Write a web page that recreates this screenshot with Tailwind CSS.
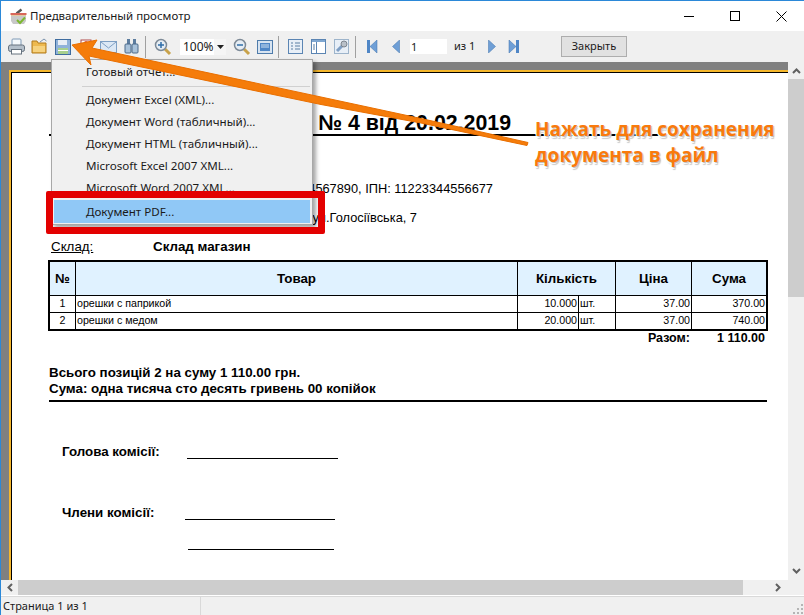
<!DOCTYPE html>
<html lang="ru">
<head>
    <meta charset="UTF-8">
    <meta name="viewport" content="width=device-width, initial-scale=1.0">
    <title>Предварительный просмотр</title>
    <script src="https://cdn.jsdelivr.net/npm/@tailwindcss/browser@4"></script>
</head>
<body class="bg-white overflow-hidden">
<div class="relative w-[804px] h-[615px] flex flex-col border-t border-l border-[#2b88d8] overflow-hidden font-['Noto_Sans',sans-serif] text-[#1a1a1a]">

    <!-- Заголовок окна -->
    <div class="h-[30px] shrink-0 flex items-center bg-white">
        <svg class="ml-[9px] w-[17px] h-[17px]" viewBox="0 0 17 17">
            <path d="M11.5 1.5 L6.5 5.5" stroke="#555" stroke-width="2.5"/>
            <path d="M1 7 H16 V13 L14 16 H3 L1 13Z" fill="#c8c8c8"/>
            <rect x="0.5" y="5" width="16" height="2" fill="#d9675a"/>
            <rect x="1" y="7" width="15" height="1" fill="#e3c9a0"/>
            <path d="M7 12 L10 15 L15 9.5" fill="none" stroke="#7cb82f" stroke-width="2"/>
        </svg>
        <span class="ml-[3px] text-[11.5px]">Предварительный просмотр</span>
        <div class="ml-auto flex items-center h-full">
            <div class="w-[46px] h-full flex items-center justify-center"><div class="w-[10px] h-px bg-black"></div></div>
            <div class="w-[46px] h-full flex items-center justify-center"><div class="w-[10px] h-[10px] border border-black"></div></div>
            <div class="w-[46px] h-full flex items-center justify-center">
                <svg class="w-[11px] h-[11px]" viewBox="0 0 11 11"><path d="M0.5 0.5 L10.5 10.5 M10.5 0.5 L0.5 10.5" stroke="#000" stroke-width="1"/></svg>
            </div>
        </div>
    </div>

    <!-- Панель инструментов -->
    <div class="h-[31px] shrink-0 flex items-center pl-[4px] bg-[#f0f0f0] text-[11px]">
        <div class="w-[23px] flex justify-center">
            <svg class="w-[17px] h-[17px]" viewBox="0 0 17 17"><rect x="4" y="1" width="9" height="7" rx="1" fill="#f4f8fc" stroke="#7f9ab6"/><rect x="0.5" y="7" width="16" height="6.5" rx="2" fill="#b4bfca" stroke="#66727f"/><rect x="3.5" y="11.5" width="10" height="4.5" fill="#fff" stroke="#66727f"/></svg>
        </div>
        <div class="w-[23px] flex justify-center">
            <svg class="w-[17px] h-[17px]" viewBox="0 0 17 17"><path d="M9 4 L13 1 L15.5 3" fill="none" stroke="#7b93ad"/><path d="M1 3 H6 L7 5 H15 V15 H1Z" fill="#eeb94f" stroke="#b07b1f"/><rect x="2" y="8" width="12" height="6" fill="#f6d27f"/></svg>
        </div>
        <div class="w-[23px] flex justify-center">
            <svg class="w-[16px] h-[16px]" viewBox="0 0 16 16"><rect x="0.5" y="0.5" width="15" height="15" fill="#8fb2d9" stroke="#3f6c9f"/><rect x="3" y="1" width="9" height="5" fill="#e8eef5"/><rect x="3" y="9" width="10" height="6" fill="#a8d08d"/><rect x="3" y="11" width="10" height="1" fill="#fff"/></svg>
        </div>
        <div class="w-[23px] flex justify-center">
            <svg class="w-[16px] h-[16px]" viewBox="0 0 16 16"><rect x="3" y="1" width="10" height="14" fill="#fff" stroke="#b04a4a"/><circle cx="8" cy="4" r="2" fill="#d9534f"/></svg>
        </div>
        <div class="w-[23px] flex justify-center">
            <svg class="w-[17px] h-[17px]" viewBox="0 0 17 17"><rect x="0.5" y="3.5" width="16" height="11" fill="#dce8f5" stroke="#7e9fc4"/><path d="M1 4 L8.5 10 L16 4" fill="none" stroke="#7e9fc4"/></svg>
        </div>
        <div class="w-[23px] flex justify-center">
            <svg class="w-[17px] h-[17px]" viewBox="0 0 17 17"><rect x="4" y="1" width="3" height="5" fill="#5d7d9f"/><rect x="10" y="1" width="3" height="5" fill="#5d7d9f"/><rect x="2" y="6" width="6" height="9" rx="1" fill="#a9c2da" stroke="#4c6a8a"/><rect x="9" y="6" width="6" height="9" rx="1" fill="#a9c2da" stroke="#4c6a8a"/></svg>
        </div>
        <div class="w-px h-[22px] ml-[2px] bg-[#a0a0a0]"></div>
        <div class="w-[23px] ml-[5px] flex justify-center">
            <svg class="w-[18px] h-[18px]" viewBox="0 0 18 18"><path d="M11 11 L16 16" stroke="#c8a24a" stroke-width="3"/><circle cx="7" cy="7" r="5.5" fill="#e6edf4" stroke="#7d8a97" stroke-width="1.5"/><path d="M4 7 H10 M7 4 V10" stroke="#2f6ea8" stroke-width="1.5"/></svg>
        </div>
        <div class="w-[46px] h-[16px] ml-[6px] bg-white flex items-center justify-between pl-[3px] text-[12px]">
            <span>100%</span>
            <div class="w-[12px] h-full bg-[#f5f5f5] flex items-center justify-center">
                <svg class="w-[7px] h-[4px]" viewBox="0 0 7 4"><path d="M0 0 H7 L3.5 4Z" fill="#222"/></svg>
            </div>
        </div>
        <div class="w-[23px] ml-[4px] flex justify-center">
            <svg class="w-[18px] h-[18px]" viewBox="0 0 18 18"><path d="M11 11 L16 16" stroke="#c8a24a" stroke-width="3"/><circle cx="7" cy="7" r="5.5" fill="#e6edf4" stroke="#7d8a97" stroke-width="1.5"/><path d="M4 7 H10" stroke="#2f6ea8" stroke-width="1.5"/></svg>
        </div>
        <div class="w-[23px] flex justify-center">
            <svg class="w-[16px] h-[14px]" viewBox="0 0 16 14"><rect x="0.5" y="0.5" width="15" height="13" fill="#d8e4f1" stroke="#4f7cab"/><rect x="3" y="3" width="10" height="8" fill="#4f86c6"/><path d="M4 5 H12 M4 7 H12" stroke="#cfe0f2"/></svg>
        </div>
        <div class="w-px h-[22px] ml-[2px] bg-[#a0a0a0]"></div>
        <div class="w-[23px] ml-[5px] flex justify-center">
            <svg class="w-[15px] h-[15px]" viewBox="0 0 15 15"><rect x="0.5" y="0.5" width="14" height="14" fill="#e8eff7" stroke="#5b85b3"/><path d="M3 4 H5 M7 4 H12 M3 7 H5 M7 7 H12 M3 10 H5 M7 10 H12" stroke="#5b7ea3"/></svg>
        </div>
        <div class="w-[23px] flex justify-center">
            <svg class="w-[15px] h-[15px]" viewBox="0 0 15 15"><rect x="0.5" y="0.5" width="14" height="14" fill="#fff" stroke="#5b85b3"/><rect x="1" y="1" width="13" height="2" fill="#7fa7d1"/><path d="M5.5 3 V14" stroke="#5b85b3"/><path d="M2 6 H4 M2 8 H4 M2 10 H4" stroke="#5b7ea3"/></svg>
        </div>
        <div class="w-[23px] flex justify-center">
            <svg class="w-[15px] h-[15px]" viewBox="0 0 15 15"><rect x="0.5" y="0.5" width="14" height="14" fill="#e8eff7" stroke="#9db4cb"/><path d="M3 12 L8 7" stroke="#7f9fc4" stroke-width="3"/><circle cx="10" cy="5" r="3" fill="#b9c0c8" stroke="#7d858e"/></svg>
        </div>
        <div class="w-px h-[22px] ml-[2px] bg-[#a0a0a0]"></div>
        <div class="w-[23px] ml-[5px] flex justify-center">
            <svg class="w-[11px] h-[13px]" viewBox="0 0 11 13"><rect x="0" y="0" width="3" height="13" fill="#4f86c6"/><path d="M10 0 V13 L3 6.5Z" fill="#6f9fd6" stroke="#3f73ad" stroke-width="0.5"/></svg>
        </div>
        <div class="w-[23px] flex justify-center">
            <svg class="w-[8px] h-[13px]" viewBox="0 0 8 13"><path d="M7.5 0 V13 L0.5 6.5Z" fill="#6f9fd6" stroke="#3f73ad" stroke-width="0.5"/></svg>
        </div>
        <div class="w-[37px] h-[15px] ml-[3px] bg-white pl-px text-[11px] leading-[15px]">1</div>
        <div class="ml-[7px] w-[24px] text-[11px]">из 1</div>
        <div class="w-[23px] ml-[2px] flex justify-center">
            <svg class="w-[8px] h-[13px]" viewBox="0 0 8 13"><path d="M0.5 0 V13 L7.5 6.5Z" fill="#6f9fd6" stroke="#3f73ad" stroke-width="0.5"/></svg>
        </div>
        <div class="w-[21px] flex justify-center">
            <svg class="w-[11px] h-[13px]" viewBox="0 0 11 13"><path d="M1 0 V13 L8 6.5Z" fill="#6f9fd6" stroke="#3f73ad" stroke-width="0.5"/><rect x="8" y="0" width="3" height="13" fill="#4f86c6"/></svg>
        </div>
        <div class="ml-[37px] w-[66px] h-[21px] flex items-center justify-center bg-[#e1e1e1] border border-[#adadad] text-[11px]">Закрыть</div>
    </div>

    <!-- Область просмотра -->
    <div class="flex-1 min-h-0 flex">
        <div class="flex-1 min-w-0 bg-[#808080] pl-2 pt-2 overflow-hidden">
            <div class="h-full border-l-2 border-t-2 border-[#f5b72c]">
                <div class="h-full bg-white border-l border-t border-black font-['Liberation_Sans',sans-serif] text-black">
                    <div class="pl-[37px] pr-[20px]">
                        <div class="mt-[39px] w-[610px] h-[24px] border-b-2 border-black text-right pr-[148px] text-[21.33px] leading-[22px] font-bold whitespace-nowrap">№ 4 від 20.02.2019</div>
                        <div class="mt-[46px] w-[444px] text-right text-[12.8px] leading-[14px] whitespace-nowrap">ЄДРПОУ: 1234567890, ІПН: 11223344556677</div>
                        <div class="mt-[15px] w-[368px] text-right text-[12.8px] leading-[14px] whitespace-nowrap">вул.Голосіївська, 7</div>
                        <div class="mt-[14px] ml-[2px] flex text-[13.33px] leading-[15px]">
                            <span class="w-[102px] underline">Склад:</span>
                            <span class="font-bold">Склад магазин</span>
                        </div>
                    </div>
                    <!-- Таблица -->
                    <div class="ml-[36px] mt-[6px] w-[720px] border-2 border-black">
                        <div class="h-[33px] flex items-center bg-[#e0f2ff] text-[13.33px] font-bold text-center">
                            <div class="w-[26px] h-full pt-px flex items-center justify-center border-r border-black">№</div>
                            <div class="w-[442px] h-full pt-px flex items-center justify-center border-r border-black">Товар</div>
                            <div class="w-[98px] h-full pt-px flex items-center justify-center border-r border-black">Кількість</div>
                            <div class="w-[76px] h-full pt-px flex items-center justify-center border-r border-black">Ціна</div>
                            <div class="flex-1 h-full pt-px flex items-center justify-center">Сума</div>
                        </div>
                        <div class="h-[17px] flex items-center border-t border-black text-[10.67px] leading-[15px]">
                            <div class="w-[26px] h-full text-center border-r border-black">1</div>
                            <div class="w-[442px] h-full pl-px border-r border-black">орешки с паприкой</div>
                            <div class="w-[61px] h-full pr-px text-right border-r border-black">10.000</div>
                            <div class="w-[37px] h-full pl-px border-r border-black">шт.</div>
                            <div class="w-[76px] h-full pr-px text-right border-r border-black">37.00</div>
                            <div class="flex-1 h-full pr-px text-right">370.00</div>
                        </div>
                        <div class="h-[17px] flex items-center border-t border-black text-[10.67px] leading-[15px]">
                            <div class="w-[26px] h-full text-center border-r border-black">2</div>
                            <div class="w-[442px] h-full pl-px border-r border-black">орешки с медом</div>
                            <div class="w-[61px] h-full pr-px text-right border-r border-black">20.000</div>
                            <div class="w-[37px] h-full pl-px border-r border-black">шт.</div>
                            <div class="w-[76px] h-full pr-px text-right border-r border-black">37.00</div>
                            <div class="flex-1 h-full pr-px text-right">740.00</div>
                        </div>
                    </div>
                    <div class="ml-[36px] w-[717px] flex justify-end text-[12.5px] leading-[14px] font-bold">
                        <span>Разом:</span>
                        <span class="w-[75px] text-right">1 110.00</span>
                    </div>
                    <div class="ml-[37px] w-[718px] mt-[19px] border-b-2 border-black text-[13.33px] leading-[17px] font-bold pb-[3px]">
                        <div>Всього позицій 2 на суму 1 110.00 грн.</div>
                        <div class="-mt-px">Сума: одна тисяча сто десять гривень 00 копійок</div>
                    </div>
                    <div class="ml-[50px] mt-[42px] flex text-[13.33px] leading-[15px] font-bold">
                        <span class="w-[125px]">Голова комісії:</span>
                        <div class="w-[151px] h-[15px] border-b border-black"></div>
                    </div>
                    <div class="ml-[50px] mt-[46px] flex text-[13.33px] leading-[15px] font-bold">
                        <span class="w-[123px]">Члени комісії:</span>
                        <div class="w-[150px] h-[15px] border-b border-black"></div>
                    </div>
                    <div class="ml-[176px] mt-[15px] w-[146px] h-[15px] border-b border-black"></div>
                </div>
            </div>
        </div>
        <!-- Вертикальная прокрутка -->
        <div class="w-[16px] shrink-0 flex flex-col bg-[#f0f0f0]">
            <div class="h-[17px] flex items-center justify-center">
                <svg class="w-[9px] h-[6px]" viewBox="0 0 9 6"><path d="M1 5 L4.5 1.5 L8 5" fill="none" stroke="#606060" stroke-width="2"/></svg>
            </div>
            <div class="h-[218px] bg-[#cdcdcd]"></div>
            <div class="mt-auto h-[18px] flex items-center justify-center">
                <svg class="w-[9px] h-[6px]" viewBox="0 0 9 6"><path d="M1 1 L4.5 4.5 L8 1" fill="none" stroke="#606060" stroke-width="2"/></svg>
            </div>
        </div>
    </div>

    <!-- Горизонтальная прокрутка -->
    <div class="h-[15px] shrink-0 flex bg-[#f0f0f0]">
        <div class="w-[17px] flex items-center justify-center">
            <svg class="w-[6px] h-[9px]" viewBox="0 0 6 9"><path d="M5 1 L1.5 4.5 L5 8" fill="none" stroke="#606060" stroke-width="2"/></svg>
        </div>
        <div class="w-[725px] bg-[#cdcdcd]"></div>
        <div class="ml-auto w-[45px] flex items-center justify-center pr-[8px]">
            <svg class="w-[6px] h-[9px]" viewBox="0 0 6 9"><path d="M1 1 L4.5 4.5 L1 8" fill="none" stroke="#606060" stroke-width="2"/></svg>
        </div>
    </div>

    <!-- Строка состояния -->
    <div class="h-[19px] shrink-0 flex items-center bg-[#f0f0f0] border-t border-[#d9d9d9] mt-px text-[11px]">
        <div class="w-[200px] h-full pl-[2px] leading-[18px] border-r border-[#d9d9d9]">Страница 1 из 1</div>
        <svg class="ml-auto mt-[6px] mr-px w-[10px] h-[10px]" viewBox="0 0 10 10"><path d="M8 0h2v2H8zM4 4h2v2H4zM8 4h2v2H8zM0 8h2v2H0zM4 8h2v2H4zM8 8h2v2H8z" fill="#b5b5b5"/></svg>
    </div>

    <!-- Выпадающее меню -->
    <div class="absolute left-[50px] top-[58px] w-[262px] h-[166px] bg-[#f0f0f0] border border-[#a8a8a8] shadow-[3px_3px_4px_rgba(0,0,0,0.35)] text-[11.6px] pt-[1px]">
        <div class="h-[22px] pl-[34px] leading-[22px]">Готовый отчет...</div>
        <div class="h-px ml-[30px] mr-[2px] mt-[3px] mb-[2px] bg-[#d0d0d0]"></div>
        <div class="h-[22px] pl-[34px] leading-[22px]">Документ Excel (XML)...</div>
        <div class="h-[22px] pl-[34px] leading-[22px]">Документ Word (табличный)...</div>
        <div class="h-[22px] pl-[34px] leading-[22px]">Документ HTML (табличный)...</div>
        <div class="h-[22px] pl-[34px] leading-[22px]">Microsoft Excel 2007 XML...</div>
        <div class="h-[22px] pl-[34px] leading-[22px]">Microsoft Word 2007 XML...</div>
        <div class="h-[23px] mt-px mx-[2px] pl-[32px] leading-[23px] bg-[#90c8f6]">Документ PDF...</div>
    </div>

    <!-- Красная рамка -->
    <div class="absolute left-[45px] top-[190px] w-[279px] h-[43px] border-[7px] border-[#e30000] rounded-[2px]"></div>

    <!-- Стрелка -->
    <svg class="absolute left-0 top-0 w-[804px] h-[615px]" viewBox="0 0 804 615">
        <polygon points="71,44 96,39 91,47 320,96 420,117.5 527,141.5 526,144.5 420,122 320,103.5 88,55 90,64" fill="#f57c0a" stroke="#e96f00" stroke-width="1"/>
    </svg>

    <!-- Подпись -->
    <div class="absolute left-[534px] top-[115px] text-[19px] leading-[26px] font-bold font-['Open_Sans',sans-serif] text-[#f97a0c] [text-shadow:1px_1px_1px_#bbb,-1px_-1px_0_#fff,1px_-1px_0_#fff,-1px_1px_0_#fff,0_2px_0_#fff,1px_3px_1px_#ccc] whitespace-nowrap">
        <div>Нажать для сохранения</div>
        <div>документа в файл</div>
    </div>
</div>
</body>
</html>
